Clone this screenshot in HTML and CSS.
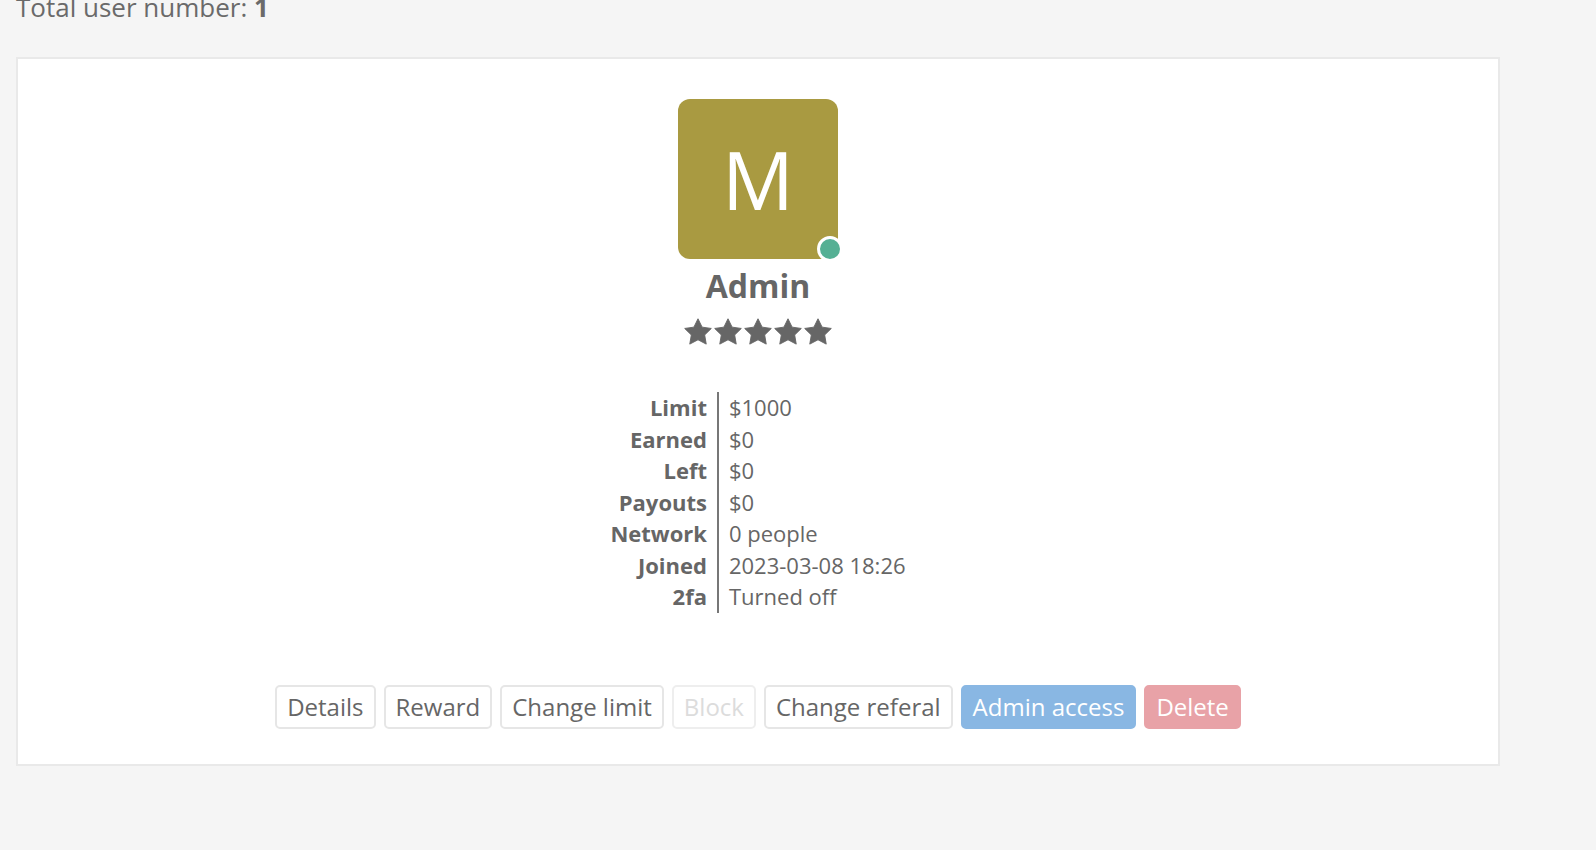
FILE: index.html
```html
<!DOCTYPE html>
<html>
<head>
<meta charset="utf-8">
<link rel="stylesheet" href="styles.css">
</head>
<body>
<div class="page">
  <div class="total">Total user number: <b>1</b></div>
  <div class="card">
    <div class="avatar">
      <span class="letter">M</span>
      <span class="dot"></span>
    </div>
    <div class="name">Admin</div>
    <div class="stars">
      <svg viewBox="0 0 24 23" class="star"><path d="M12 0.6L15.53 7.75L23.41 8.89L17.71 14.45L19.05 22.31L12 18.6L4.95 22.31L6.29 14.45L0.59 8.89L8.47 7.75Z"/></svg>
      <svg viewBox="0 0 24 23" class="star"><path d="M12 0.6L15.53 7.75L23.41 8.89L17.71 14.45L19.05 22.31L12 18.6L4.95 22.31L6.29 14.45L0.59 8.89L8.47 7.75Z"/></svg>
      <svg viewBox="0 0 24 23" class="star"><path d="M12 0.6L15.53 7.75L23.41 8.89L17.71 14.45L19.05 22.31L12 18.6L4.95 22.31L6.29 14.45L0.59 8.89L8.47 7.75Z"/></svg>
      <svg viewBox="0 0 24 23" class="star"><path d="M12 0.6L15.53 7.75L23.41 8.89L17.71 14.45L19.05 22.31L12 18.6L4.95 22.31L6.29 14.45L0.59 8.89L8.47 7.75Z"/></svg>
      <svg viewBox="0 0 24 23" class="star"><path d="M12 0.6L15.53 7.75L23.41 8.89L17.71 14.45L19.05 22.31L12 18.6L4.95 22.31L6.29 14.45L0.59 8.89L8.47 7.75Z"/></svg>
    </div>
    <table class="info">
      <tr><th>Limit</th><td>$1000</td></tr>
      <tr><th>Earned</th><td>$0</td></tr>
      <tr><th>Left</th><td>$0</td></tr>
      <tr><th>Payouts</th><td>$0</td></tr>
      <tr><th>Network</th><td>0 people</td></tr>
      <tr><th>Joined</th><td>2023-03-08 18:26</td></tr>
      <tr><th>2fa</th><td>Turned off</td></tr>
    </table>
    <div class="actions">
      <button class="btn">Details</button>
      <button class="btn">Reward</button>
      <button class="btn">Change limit</button>
      <button class="btn disabled">Block</button>
      <button class="btn">Change referal</button>
      <button class="btn primary">Admin access</button>
      <button class="btn danger">Delete</button>
    </div>
  </div>
</div>
</body>
</html>
```
FILE: styles.css
```css
html, body {
  margin: 0;
  padding: 0;
  background: #f5f5f5;
  font-family: "Open Sans", "Liberation Sans", sans-serif;
  color: #666;
  overflow: hidden;
}
.page {
  padding: 0 96px 0 16px;
}
.total {
  font-size: 26px;
  line-height: 36px;
  margin-top: -11px;
  color: #6a6a6a;
}
.total b { font-weight: 700; }
.card {
  margin-top: 32px;
  box-sizing: border-box;
  width: 1484px;
  background: #fff;
  border: 2px solid #e9e9e9;
  padding: 40px 0 35px;
  display: flex;
  flex-direction: column;
  align-items: center;
}
.avatar {
  position: relative;
  width: 160px;
  height: 160px;
  border-radius: 12px;
  background: #a99a41;
  display: flex;
  align-items: center;
  justify-content: center;
}
.letter {
  color: #fff;
  font-size: 80px;
  line-height: 1;
  font-weight: 400;
}
.dot {
  position: absolute;
  right: -5px;
  bottom: -3px;
  width: 20px;
  height: 20px;
  border-radius: 50%;
  background: #55b094;
  border: 3px solid #fff;
}
.name {
  margin-top: 7px;
  font-size: 32px;
  line-height: 40px;
  font-weight: 700;
  color: #666;
}
.stars {
  margin-top: 12px;
  display: flex;
  gap: 2px;
}
.star {
  width: 28px;
  height: 27px;
  fill: #666;
  stroke: #666;
  stroke-width: 0.8;
  stroke-linejoin: round;
  display: block;
}
.info {
  margin-top: 47px;
  border-collapse: collapse;
  font-size: 22px;
  line-height: 31.5px;
}
.info th {
  text-align: right;
  font-weight: 700;
  padding: 0 10px 0 0;
  border-right: 2px solid #777;
  white-space: nowrap;
}
.info td {
  text-align: left;
  padding: 0 0 0 10px;
  white-space: nowrap;
}
.actions {
  margin-top: 72px;
  display: flex;
  gap: 8px;
}
.btn {
  font-family: "Open Sans", "Liberation Sans", sans-serif;
  font-size: 24px;
  line-height: 40px;
  height: 44px;
  padding: 0 10px;
  border: 2px solid #e6e6e6;
  border-radius: 5px;
  background: #fff;
  color: #666;
  cursor: pointer;
}
.btn.disabled {
  color: #dcdcdc;
  border-color: #eeeeee;
}
.btn.primary {
  background: #89b7e3;
  border-color: #89b7e3;
  color: #fff;
}
.btn.danger {
  background: #e8a2a7;
  border-color: #e8a2a7;
  color: #fff;
}
```
